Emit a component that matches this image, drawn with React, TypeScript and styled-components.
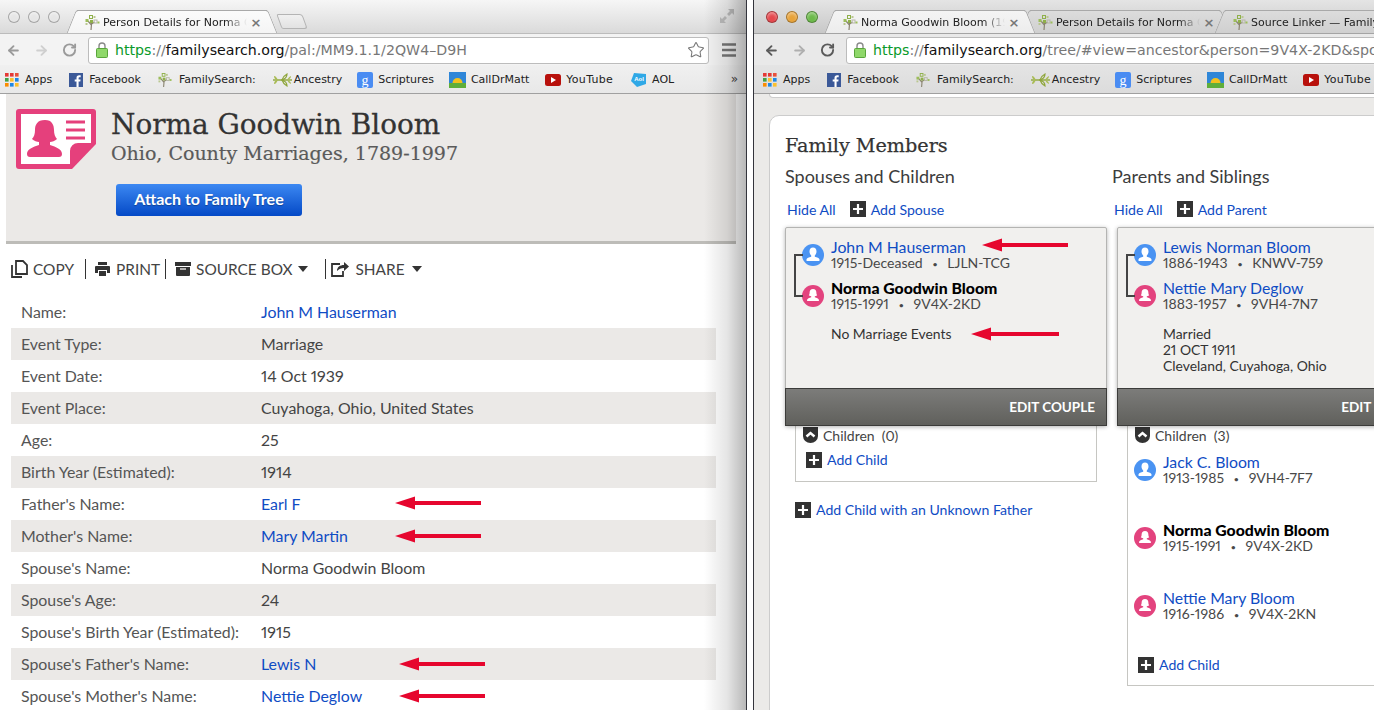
import React from "react";
import styled, { createGlobalStyle } from "styled-components";
import { ArrowLeft, ArrowRight, RotateCw, Star } from "lucide-react";

const Global = createGlobalStyle`
  html, body { margin: 0; padding: 0; background: #fff; }
  * { box-sizing: border-box; }
`;

const BODY = `Lato, "Open Sans", sans-serif`;
const UI = `"DejaVu Sans", sans-serif`;
const SLAB = `"DejaVu Serif", serif`;
const LINK = "#0f4cc4";

const Page = styled.div`
  width: 1374px; height: 710px; overflow: hidden; display: flex; background: #fff;
  font-family: ${BODY}; font-feature-settings: "pnum";
`;
const Win = styled.div<{ $w: number; $focus?: boolean }>`
  position: relative; width: ${(p) => p.$w}px; flex: none; height: 710px; overflow: hidden;
  display: flex; flex-direction: column;
  ${(p) => (p.$focus ? "border-left: 1px solid #33343c; margin-left: 6px;" : "border-right: 1px solid #33343c;")}
`;
const Shade = styled.div`
  position: absolute; top: 0; right: 0; bottom: 0; width: 42px; pointer-events: none;
  background: linear-gradient(to right, rgba(0,0,0,0), rgba(0,0,0,.1) 55%, rgba(0,0,0,.28));
`;
const Glyph = styled.svg` flex: none; `;
const Strip = styled.div<{ $focus?: boolean }>`
  height: 34px; flex: none; display: flex; align-items: flex-end; overflow: hidden;
  padding-left: ${(p) => (p.$focus ? 12 : 8)}px;
  border-bottom: 1px solid ${(p) => (p.$focus ? "#a4a4a4" : "#bcbcbc")};
  background: ${(p) => (p.$focus ? "linear-gradient(#e4e4e4,#c8c8c8)" : "linear-gradient(#f6f6f6,#dadada)")};
`;
const Lights = styled.div`
  display: flex; gap: 8px; align-self: flex-start; margin-top: 11px; width: 69px; flex: none;
`;
const Light = styled.span<{ $c: string }>`
  width: 12px; height: 12px; border-radius: 50%; flex: none;
  background: ${(p) => p.$c};
  border: 1px solid rgba(0,0,0,.28);
  box-shadow: inset 0 2px 3px rgba(255,255,255,.4);
`;
const Tab = styled.div<{ $active?: boolean; $focus?: boolean; $ml?: number }>`
  position: relative; width: 190px; height: 24px; flex: none; margin: 0 0 -1px ${(p) => p.$ml ?? 0}px;
  display: flex; align-items: center; padding: 0 5px 0 8px; gap: 3px; z-index: ${(p) => (p.$active ? 2 : 1)};
  font: 11px ${UI}; color: #222;
  border-top: 1px solid #a9a9a9; 
  background: ${(p) => (p.$active ? (p.$focus ? "linear-gradient(#f4f4f4,#ececec)" : "linear-gradient(#fbfbfb,#f4f4f4)") : "linear-gradient(#dcdcdc,#cfcfcf)")};
  &::before, &::after {
    content: ""; position: absolute; top: -1px; bottom: 0; width: 12px;
    background: inherit; border-top: 1px solid #a9a9a9;
  }
  &::before { left: -6px; transform: skewX(-22deg); border-left: 1px solid #a9a9a9; border-top-left-radius: 3px; }
  &::after { right: -6px; transform: skewX(22deg); border-right: 1px solid #a9a9a9; border-top-right-radius: 3px; }
  & > * { position: relative; z-index: 1; }
`;
const TabTitle = styled.span`
  flex: 1; white-space: nowrap; overflow: hidden;
  -webkit-mask-image: linear-gradient(to right, #000 85%, transparent);
  mask-image: linear-gradient(to right, #000 85%, transparent);
`;
const TabClose = styled.span`
  font: bold 13px ${UI}; color: #777; width: 12px; text-align: center; flex: none; line-height: 12px;
`;
const NewTab = styled.div`
  width: 26px; height: 15px; margin: 0 0 4px 12px; flex: none; transform: skewX(20deg);
  border: 1px solid #b4b4b4; border-radius: 2px 3px 3px 2px; background: linear-gradient(#f0f0f0,#e2e2e2);
`;
const Expand = styled.svg`
  position: absolute; top: 8px; right: 11px;
`;
const Toolbar = styled.div<{ $focus?: boolean }>`
  height: 31px; padding-top: 1px; flex: none; display: flex; align-items: center; gap: 13px;
  padding-left: ${(p) => (p.$focus ? 10 : 6)}px;
  background: ${(p) => (p.$focus ? "#e9e9e9" : "#f3f3f3")};
  color: ${(p) => (p.$focus ? "#5a5a5a" : "#9a9a9a")};
`;
const NavIcon = styled.span<{ $dim?: boolean }>`
  width: 15px; height: 16px; display: flex; align-items: center; justify-content: center; flex: none;
  ${(p) => p.$dim && "opacity:.4;"}
`;
const Omni = styled.div<{ $w: number }>`
  width: ${(p) => p.$w}px; height: 27px; flex: none; margin-left: -2px; background: #fff;
  border: 1px solid #bcbcbc; border-radius: 3px; display: flex; align-items: center; padding: 0 3px 0 7px;
  font: 14.2px ${UI}; white-space: nowrap; overflow: hidden;
`;
const Lock = styled.svg` flex: none; margin-right: 7px; `;
const Https = styled.span` color: #0a9a2a; `;
const Slashes = styled.span` color: #777; `;
const Host = styled.span` color: #111; `;
const Path = styled.span` color: #777; flex: 1; `;
const Marks = styled.div<{ $focus?: boolean }>`
  height: 29px; padding-top: 1px; flex: none; display: flex; align-items: center; gap: 17px; overflow: hidden;
  padding-left: ${(p) => (p.$focus ? 9 : 5)}px;
  font: 11px ${UI}; color: #222; white-space: nowrap;
  border-bottom: 1px solid #a0a0a0;
  background: ${(p) => (p.$focus ? "linear-gradient(#e4e4e4,#dcdcdc)" : "linear-gradient(#f0f0f0,#e8e8e8)")};
`;
const Mark = styled.span<{ $gap?: number; $ml?: number; $ls?: number }>`
  display: inline-flex; align-items: center; gap: ${(p) => p.$gap ?? 6}px; flex: none;
  margin-left: ${(p) => p.$ml ?? 0}px; letter-spacing: ${(p) => p.$ls ?? 0}px;
`;
const More = styled.span`
  position: absolute; right: 8px; top: 72px; font: 12px ${UI}; color: #444;
`;

/* Left page */
const LeftBody = styled.div`
  flex: 1; padding-left: 6px; background: #fff; min-height: 0;
`;
const Hero = styled.div`
  width: 730px; height: 150px; background: #ebe9e7; border-bottom: 3px solid #bdbcb8;
  padding: 15px 0 0 10px;
`;
const HeroTop = styled.div` display: flex; gap: 15px; `;
const HeroText = styled.div` padding-top: 1px; `;
const HeroTitle = styled.h1`
  margin: 0; font: 400 27.9px/30px ${SLAB}; color: #333; -webkit-text-stroke: .3px #333;
`;
const HeroSub = styled.div`
  font: 400 19px/26px ${SLAB}; color: #5a5a5a; -webkit-text-stroke: .2px #5a5a5a;
`;
const Attach = styled.button`
  display: block; margin: 15px 0 0 100px; width: 186px; height: 32px; border: 0; border-radius: 3px;
  background: linear-gradient(#3c88f2,#0449c6); color: #fff; font: 700 16px/30px ${BODY};
  text-shadow: 0 1px 1px rgba(0,0,0,.3); padding: 0 0 2px;
`;
const Actions = styled.div`
  height: 52px; padding: 0 0 2px 5px; display: flex; align-items: center; font: 400 15.4px ${BODY}; color: #444;
`;
const Act = styled.span<{ $ml?: number; $gap?: number }>`
  display: inline-flex; align-items: center; gap: ${(p) => p.$gap ?? 5}px; margin-left: ${(p) => p.$ml ?? 0}px;
`;
const Sep = styled.span<{ $ml: number }>`
  width: 1px; height: 20px; background: #333; margin-left: ${(p) => p.$ml}px;
`;
const Caret = styled.span`
  width: 0; height: 0; border: 5.5px solid transparent; border-top: 6px solid #333; border-bottom: 0;
`;
const Table = styled.div` width: 705px; margin-left: 5px; `;
const Row = styled.div<{ $alt: boolean }>`
  position: relative; height: 32px; padding: 0 0 1px 10px; display: flex; align-items: center;
  background: ${(p) => (p.$alt ? "#ebe9e7" : "#fff")}; font-size: 15.9px; color: #555;
`;
const Label = styled.span` width: 240px; flex: none; `;
const Value = styled.span<{ $link?: boolean }>`
  color: ${(p) => (p.$link ? LINK : "#444")};
`;
const ArrowMark = styled.svg<{ $l: number; $t: number }>`
  position: absolute; left: ${(p) => p.$l}px; top: ${(p) => p.$t}px;
`;

/* Right page */
const RightBody = styled.div`
  flex: 1; min-height: 0; background: #ebeae8; padding-left: 15px; overflow: hidden;
`;
const PrevCard = styled.div`
  height: 4px; background: #fff; border: 1px solid #ccc; border-top: 0; border-radius: 0 0 10px 10px; width: 700px;
`;
const FamilyCard = styled.div`
  margin-top: 17px; width: 800px; height: 620px; background: #fff; border: 1px solid #ccc; border-radius: 10px;
  padding: 17px 0 0 15px;
`;
const FamilyTitle = styled.h2`
  margin: 0; font: 400 19.2px/26px ${SLAB}; color: #333; -webkit-text-stroke: .25px #333;
`;
const Columns = styled.div` display: flex; margin-top: 4px; `;
const Col = styled.div` width: 327px; flex: none; `;
const ColTitle = styled.h3`
  margin: 0; font: 400 18px/26px ${BODY}; color: #3c3c3c;
`;
const LinksRow = styled.div`
  height: 20px; margin-top: 10px; padding-left: 2px; display: flex; align-items: center; gap: 14px;
  font-size: 14.1px; color: ${LINK};
`;
const PlusLink = styled.span`
  display: inline-flex; align-items: center; gap: 5px; color: ${LINK}; font-size: 14.1px; white-space: nowrap;
`;
const Couple = styled.div<{ $inset?: number }>`
  position: relative; z-index: 1; margin: 8px 0 0 ${(p) => p.$inset ?? 0}px; width: 322px; height: 199px;
  background: #f1f0ee; border: 1px solid #b4b4b2; border-radius: 2px; box-shadow: 0 1px 4px rgba(0,0,0,.3);
  display: flex; flex-direction: column;
`;
const CoupleBody = styled.div` flex: 1; padding: 11px 0 0 16px; position: relative; `;
const Connector = styled.span`
  position: absolute; left: 8px; top: 26px; width: 9px; height: 43px;
  border: 2px solid #444; border-right: 0;
`;
const Person = styled.div<{ $h?: number; $mb?: number }>`
  display: flex; gap: 7px; ${(p) => p.$h && `height:${p.$h}px;`} margin-bottom: ${(p) => p.$mb ?? 0}px;
`;
const AvatarIcon = styled.svg<{ $mt?: number }>` flex: none; margin-top: ${(p) => p.$mt ?? 5}px; `;
const PName = styled.div<{ $link?: boolean }>`
  font: ${(p) => (p.$link ? 400 : 900)} 15.8px/16px ${BODY}; color: ${(p) => (p.$link ? LINK : "#000")}; white-space: nowrap;
`;
const PMeta = styled.div`
  font-size: 14px; line-height: 16px; color: #484848; white-space: nowrap;
`;
const Dot = styled.span` margin: 0 10px; font-size: 8px; line-height: 0; vertical-align: 1px; font-weight: 700; `;
const Events = styled.div`
  margin: 14px 0 0 29px; font-size: 13.9px; line-height: 16px; color: #333;
`;
const EditBar = styled.div`
  height: 38px; flex: none; margin: 0 -1px -1px; display: flex; align-items: center; justify-content: flex-end;
  padding-right: 11px; border: 1px solid #3c3c3a; 
  background: linear-gradient(#7c7c7a,#60605c); color: #fff; font: 700 13.5px ${BODY};
`;
const KidsShift = styled.div` margin-left: 5px; `;
const KidsBox = styled.div<{ $h: number }>`
  margin-left: 10px; width: 302px; height: ${(p) => p.$h}px; border: 1px solid #c6c6c2; border-top: 0;
  padding: 1px 0 0 7px;
`;
const KidsHead = styled.div`
  display: flex; align-items: center; gap: 5px; height: 16px; font-size: 14px; color: #444;
`;
const AddKid = styled.div<{ $mt?: number }>`
  margin: ${(p) => p.$mt ?? 8}px 0 0 3px;
`;
const Below = styled.div` margin-top: 19px; padding-left: 10px; `;
const KidList = styled.div` margin: 11px 0 0 -1px; `;

const Tree = ({ s = 15 }: { s?: number }) => (
  <Glyph width={s} height={s} viewBox="0 0 15 15">
    <path d="M6 15 L6.6 8 M6.4 10 L3 6 M6.6 9 L9.5 7" stroke="#8a8470" strokeWidth="1.2" fill="none" />
    <rect x="4.5" y="0.5" width="3" height="3" fill="none" stroke="#8fb04a" strokeWidth="1" />
    <rect x="0.5" y="4" width="3" height="3" fill="#9cbd5a" />
    <rect x="8.5" y="1" width="2" height="2" fill="#b9c78f" />
    <rect x="5" y="5" width="3" height="3" fill="#8fb04a" />
    <rect x="9" y="5" width="3" height="3" fill="none" stroke="#b8b8a8" strokeWidth="1" />
    <rect x="12.5" y="6.5" width="2" height="2" fill="#9cbd5a" />
    <rect x="0.5" y="8" width="2" height="2" fill="#b9c78f" />
  </Glyph>
);
const Apps = () => (
  <Glyph width="14" height="14" viewBox="0 0 14 14">
    {["#e53935", "#e53935", "#e8503a", "#43a047", "#fbc02d", "#1e88e5", "#fb8c00", "#1e88e5", "#fbc02d"].map((c, i) => (
      <rect key={i} x={(i % 3) * 5} y={Math.floor(i / 3) * 5} width="3.6" height="3.6" fill={c} />
    ))}
  </Glyph>
);
const Fb = () => (
  <Glyph width="14" height="14" viewBox="0 0 14 14">
    <rect width="14" height="14" fill="#3b5998" />
    <path d="M9.6 14V8.6h1.7l.3-2.1h-2V5.2c0-.6.2-1 1-1h1.1V2.3c-.2 0-.8-.1-1.6-.1-1.6 0-2.6 1-2.6 2.7v1.6H5.7v2.1h1.8V14z" fill="#fff" />
  </Glyph>
);
const Ancestry = () => (
  <Glyph width="20" height="14" viewBox="0 0 20 14">
    <path d="M0 7h19" stroke="#8fa63c" strokeWidth="1.4" />
    <path d="M5 7C3 4 3 3 1 3c0 2 1 4 4 4zM5 7c-2 3-2 4-4 4 0-2 1-4 4-4z" fill="#a9bc55" />
    <path d="M9 7c1-3 3-5 5-6 0 3-2 5-5 6zM9 7c1 3 3 5 5 6 0-3-2-5-5-6z" fill="none" stroke="#8fa63c" strokeWidth="1.2" />
    <path d="M14 7c1-2 2-3 4-4 0 2-1 3-4 4zM14 7c1 2 2 3 4 4 0-2-1-3-4-4z" fill="#a9bc55" />
  </Glyph>
);
const Scrip = () => (
  <Glyph width="16" height="16" viewBox="0 0 16 16">
    <rect width="16" height="16" rx="2" fill="#4a8cf2" />
    <text x="8" y="12.500" textAnchor="middle" fontSize="14" fontFamily="Liberation Serif, serif" fill="#fff">g</text>
  </Glyph>
);
const Call = () => (
  <Glyph width="17" height="16" viewBox="0 0 17 16">
    <rect width="17" height="16" fill="#2e86d8" />
    <rect y="11" width="17" height="5" fill="#5fae3a" />
    <path d="M3.5 11a5 5 0 0 1 10 0z" fill="#f2c11e" />
  </Glyph>
);
const Yt = () => (
  <Glyph width="16" height="12" viewBox="0 0 16 12">
    <rect width="16" height="12" rx="2.5" fill="#b8110c" />
    <path d="M6 3l5 3-5 3z" fill="#fff" />
  </Glyph>
);
const Aol = () => (
  <Glyph width="16" height="15" viewBox="0 0 16 15">
    <path d="M3 1l12 1v10l-9 3-6-6z" fill="#2fa8e6" />
    <text x="8" y="9" textAnchor="middle" fontSize="6" fontWeight="700" fontFamily="Liberation Sans, sans-serif" fill="#fff">Aol</text>
  </Glyph>
);
const Bookmarks = ({ focus, aol }: { focus?: boolean; aol?: boolean }) => (
  <Marks $focus={focus}>
    <Mark><Apps />Apps</Mark>
    <Mark><Fb />Facebook</Mark>
    <Mark $gap={7}><Tree s={14} />FamilySearch:</Mark>
    <Mark $gap={1}><Ancestry />Ancestry</Mark>
    <Mark $gap={5} $ml={-2}><Scrip />Scriptures</Mark>
    <Mark $gap={5} $ml={-2}><Call />CallDrMatt</Mark>
    <Mark $gap={5} $ml={-1} $ls={0.3}><Yt />YouTube</Mark>
    {aol && <Mark $gap={5} $ml={1}><Aol />AOL</Mark>}
  </Marks>
);
const LockIcon = () => (
  <Lock width="12" height="16" viewBox="0 0 12 16">
    <path d="M3 7V4a3 3 0 0 1 6 0v3" fill="none" stroke="#8a8a8a" strokeWidth="1.4" />
    <rect x=".5" y="6.5" width="11" height="9" rx="1" fill="#8fd86a" stroke="#5aa53c" />
  </Lock>
);
const Nav = () => (
  <>
    <NavIcon><ArrowLeft size={17} strokeWidth={3} /></NavIcon>
    <NavIcon $dim><ArrowRight size={17} strokeWidth={3} /></NavIcon>
    <NavIcon><RotateCw size={16} strokeWidth={3} /></NavIcon>
  </>
);
const Arrow = ({ l, t, w = 86 }: { l: number; t: number; w?: number }) => (
  <ArrowMark $l={l} $t={t} width={w} height="14" viewBox={`0 0 ${w} 14`}>
    <polygon points={`0,7 20,0.5 20,5 ${w},5 ${w},9 20,9 20,13.5`} fill="#e6062e" />
  </ArrowMark>
);
const Plus = () => (
  <Glyph width="16" height="16" viewBox="0 0 16 16">
    <rect width="16" height="16" fill="#333" />
    <path d="M8 3v10M3 8h10" stroke="#fff" strokeWidth="2.2" />
  </Glyph>
);
const Avatar = ({ f }: { f?: boolean }) => (
  <AvatarIcon width="22" height="22" viewBox="0 0 22 22">
    <circle cx="11" cy="11" r="11" fill={f ? "#e3437e" : "#4a93f2"} />
    {f ? (
      <path d="M11 4c2.3 0 3.4 1.700 3.400 3.700 0 1 .3 2 .8 2.500-.8.7-1.700 1-2.400 1.100v1c2 .5 3.700 1.200 4.200 2.700.1.600-.2 1-1 1H6c-.8 0-1.100-.4-1-1 .5-1.500 2.200-2.200 4.200-2.700v-1c-.7-.1-1.600-.4-2.400-1.100.5-.5.8-1.500.8-2.500C7.600 5.700 8.700 4 11 4z" fill="#fff" />
    ) : (
      <path d="M11 3.500c2.200 0 3.500 1.600 3.500 4 0 1.800-.8 3.200-1.700 4v1.300c2.300.5 4.400 1.200 4.800 2.900.1.600-.3 1.300-1 1.300H5.400c-.7 0-1.100-.7-1-1.300.4-1.700 2.500-2.400 4.800-2.900v-1.300c-.9-.8-1.700-2.200-1.700-4 0-2.400 1.300-4 3.500-4z" fill="#fff" />
    )}
  </AvatarIcon>
);
const Chevron = () => (
  <Glyph width="15" height="16" viewBox="0 0 15 16">
    <path d="M0 0h15v9a7.500 7 0 0 1-15 0z" fill="#333" />
    <path d="M3.500 9.500L7.500 6l4 3.500" stroke="#fff" strokeWidth="2.400" fill="none" />
  </Glyph>
);

const rows: [string, string, boolean, number?, number?][] = [
  ["Name:", "John M Hauserman", true],
  ["Event Type:", "Marriage", false],
  ["Event Date:", "14 Oct 1939", false],
  ["Event Place:", "Cuyahoga, Ohio, United States", false],
  ["Age:", "25", false],
  ["Birth Year (Estimated):", "1914", false],
  ["Father's Name:", "Earl F", true, 384, 8],
  ["Mother's Name:", "Mary Martin", true, 384, 9],
  ["Spouse's Name:", "Norma Goodwin Bloom", false],
  ["Spouse's Age:", "24", false],
  ["Spouse's Birth Year (Estimated):", "1915", false],
  ["Spouse's Father's Name:", "Lewis N", true, 388, 9],
  ["Spouse's Mother's Name:", "Nettie Deglow", true, 388, 9],
];

const kids = [
  { n: "Jack C. Bloom", y: "1913-1985", id: "9VH4-7F7", f: false, link: true },
  { n: "Norma Goodwin Bloom", y: "1915-1991", id: "9V4X-2KD", f: true, link: false },
  { n: "Nettie Mary Bloom", y: "1916-1986", id: "9V4X-2KN", f: true, link: true },
];

export default function App() {
  return (
    <Page>
      <Global />
      <Win $w={747}>
        <Strip>
          <Lights>
            <Light $c="#e6e6e6" /><Light $c="#e6e6e6" /><Light $c="#e6e6e6" />
          </Lights>
          <Tab $active>
            <Tree />
            <TabTitle>Person Details for Norma G</TabTitle>
            <TabClose>×</TabClose>
          </Tab>
          <NewTab />
        </Strip>
        <Expand width="16" height="16" viewBox="0 0 16 16">
          <path d="M9 1h6v6l-2-2-3 3-2-2 3-3zM7 15H1V9l2 2 3-3 2 2-3 3z" fill="#bdbdbd" />
        </Expand>
        <Toolbar>
          <Nav />
          <Omni $w={621}>
            <LockIcon />
            <Https>https</Https><Slashes>://</Slashes><Host>familysearch.org</Host>
            <Path>/pal:/MM9.1.1/2QW4–D9H</Path>
            <Star size={18} strokeWidth={1.4} color="#777" />
          </Omni>
          <Glyph width="14" height="14" viewBox="0 0 14 14">
            <path d="M0 1.500h14M0 7h14M0 12.500h14" stroke="#777" strokeWidth="2.600" />
          </Glyph>
        </Toolbar>
        <Bookmarks aol />
        <More>»</More>
        <LeftBody>
          <Hero>
            <HeroTop>
              <Glyph width="80" height="60" viewBox="0 0 80 60">
                <path d="M3 0h74a3 3 0 0 1 3 3v32L56 60H3a3 3 0 0 1-3-3V3a3 3 0 0 1 3-3z" fill="#e5407c" />
                <path d="M5 5h70v29H62a8 8 0 0 0-8 8v13H5z" fill="#fff" />
                <path d="M29 11c7 0 9 5 9 10 0 4 1 7 3 9-2 2-5 3-7 3v3c6 2 12 4 12 9 0 2-1 3-3 3H14c-2 0-3-1-3-3 0-5 6-7 12-9v-3c-2 0-5-1-7-3 2-2 3-5 3-9 0-5 2-10 10-10z" fill="#e5407c" />
                <path d="M50 13h19M50 21h19M50 29h19" stroke="#e5407c" strokeWidth="3" />
              </Glyph>
              <HeroText>
                <HeroTitle>Norma Goodwin Bloom</HeroTitle>
                <HeroSub>Ohio, County Marriages, 1789-1997</HeroSub>
              </HeroText>
            </HeroTop>
            <Attach>Attach to Family Tree</Attach>
          </Hero>
          <Actions>
            <Act>
              <Glyph width="17" height="18" viewBox="0 0 17 18">
                <path d="M5 1h7l4 4v9H5zM1 5v12h10" fill="none" stroke="#333" strokeWidth="1.800" />
              </Glyph>
              COPY
            </Act>
            <Sep $ml={11} />
            <Act $ml={9} $gap={6}>
              <Glyph width="15" height="14" viewBox="0 0 15 14">
                <path d="M3 0h9v3H3zM1 4h13a1 1 0 0 1 1 1v6h-3V8H3v3H0V5a1 1 0 0 1 1-1zM4 9h7v5H4z" fill="#333" />
              </Glyph>
              PRINT
            </Act>
            <Sep $ml={5} />
            <Act $ml={9}>
              <Glyph width="16" height="14" viewBox="0 0 16 14">
                <path d="M0 0h16v4H0zM1 5h14v8a1 1 0 0 1-1 1H2a1 1 0 0 1-1-1z" fill="#333" />
                <path d="M5 7h6" stroke="#ebe9e7" strokeWidth="1.400" />
              </Glyph>
              SOURCE BOX
              <Caret />
            </Act>
            <Sep $ml={17} />
            <Act $ml={5} $gap={7}>
              <Glyph width="18" height="16" viewBox="0 0 18 16">
                <path d="M9 3H1v12h11v-5" fill="none" stroke="#333" strokeWidth="1.800" />
                <path d="M6 10c0-4 3-6 7-6V1l5 4.500L13 10V7c-3 0-5 1-7 3z" fill="#333" />
              </Glyph>
              SHARE
              <Caret />
            </Act>
          </Actions>
          <Table>
            {rows.map(([l, v, link, a, t], i) => (
              <Row key={l} $alt={i % 2 === 1}>
                <Label>{l}</Label>
                <Value $link={link}>{v}</Value>
                {a && <Arrow l={a} t={t ?? 9} />}
              </Row>
            ))}
          </Table>
        </LeftBody>
        <Shade />
      </Win>
      <Win $w={621} $focus>
        <Strip $focus>
          <Lights>
            <Light $c="#e5484d" /><Light $c="#e8a33a" /><Light $c="#6cba4a" />
          </Lights>
          <Tab $active $focus>
            <Tree />
            <TabTitle>Norma Goodwin Bloom (19</TabTitle>
            <TabClose>×</TabClose>
          </Tab>
          <Tab $ml={5}>
            <Tree />
            <TabTitle>Person Details for Norma G</TabTitle>
            <TabClose>×</TabClose>
          </Tab>
          <Tab $ml={5}>
            <Tree />
            <TabTitle>Source Linker — Family</TabTitle>
          </Tab>
        </Strip>
        <Toolbar $focus>
          <Nav />
          <Omni $w={560}>
            <LockIcon />
            <Https>https</Https><Slashes>://</Slashes><Host>familysearch.org</Host>
            <Path>/tree/#view=ancestor&amp;person=9V4X-2KD&amp;spous</Path>
          </Omni>
        </Toolbar>
        <Bookmarks focus />
        <RightBody>
          <PrevCard />
          <FamilyCard>
            <FamilyTitle>Family Members</FamilyTitle>
            <Columns>
              <Col>
                <ColTitle>Spouses and Children</ColTitle>
                <LinksRow>
                  <span>Hide All</span>
                  <PlusLink><Plus />Add Spouse</PlusLink>
                </LinksRow>
                <Couple>
                  <CoupleBody>
                    <Connector />
                    <Person $mb={9}>
                      <Avatar />
                      <div>
                        <PName $link>John M Hauserman</PName>
                        <PMeta>1915-Deceased<Dot>•</Dot>LJLN-TCG</PMeta>
                      </div>
                    </Person>
                    <Person>
                      <Avatar f />
                      <div>
                        <PName>Norma Goodwin Bloom</PName>
                        <PMeta>1915-1991<Dot>•</Dot>9V4X-2KD</PMeta>
                      </div>
                    </Person>
                    <Events>No Marriage Events</Events>
                    <Arrow l={196} t={10} />
                    <Arrow l={185} t={99} w={88} />
                  </CoupleBody>
                  <EditBar>EDIT COUPLE</EditBar>
                </Couple>
                <KidsBox $h={56}>
                  <KidsHead><Chevron />Children&nbsp; (0)</KidsHead>
                  <AddKid><PlusLink><Plus />Add Child</PlusLink></AddKid>
                </KidsBox>
                <Below><PlusLink><Plus />Add Child with an Unknown Father</PlusLink></Below>
              </Col>
              <Col>
                <ColTitle>Parents and Siblings</ColTitle>
                <LinksRow>
                  <span>Hide All</span>
                  <PlusLink><Plus />Add Parent</PlusLink>
                </LinksRow>
                <Couple $inset={5}>
                  <CoupleBody>
                    <Connector />
                    <Person $mb={9}>
                      <Avatar />
                      <div>
                        <PName $link>Lewis Norman Bloom</PName>
                        <PMeta>1886-1943<Dot>•</Dot>KNWV-759</PMeta>
                      </div>
                    </Person>
                    <Person>
                      <Avatar f />
                      <div>
                        <PName $link>Nettie Mary Deglow</PName>
                        <PMeta>1883-1957<Dot>•</Dot>9VH4-7N7</PMeta>
                      </div>
                    </Person>
                    <Events>Married<br />21 OCT 1911<br />Cleveland, Cuyahoga, Ohio</Events>
                  </CoupleBody>
                  <EditBar>EDIT COUPLE</EditBar>
                </Couple>
                <KidsShift>
                  <KidsBox $h={260}>
                    <KidsHead><Chevron />Children&nbsp; (3)</KidsHead>
                    <KidList>
                      {kids.map((k) => (
                        <Person key={k.n} $h={68}>
                          <Avatar f={k.f} />
                          <div>
                            <PName $link={k.link}>{k.n}</PName>
                            <PMeta>{k.y}<Dot>•</Dot>{k.id}</PMeta>
                          </div>
                        </Person>
                      ))}
                    </KidList>
                    <AddKid $mt={-2}><PlusLink><Plus />Add Child</PlusLink></AddKid>
                  </KidsBox>
                </KidsShift>
              </Col>
            </Columns>
          </FamilyCard>
        </RightBody>
      </Win>
    </Page>
  );
}
